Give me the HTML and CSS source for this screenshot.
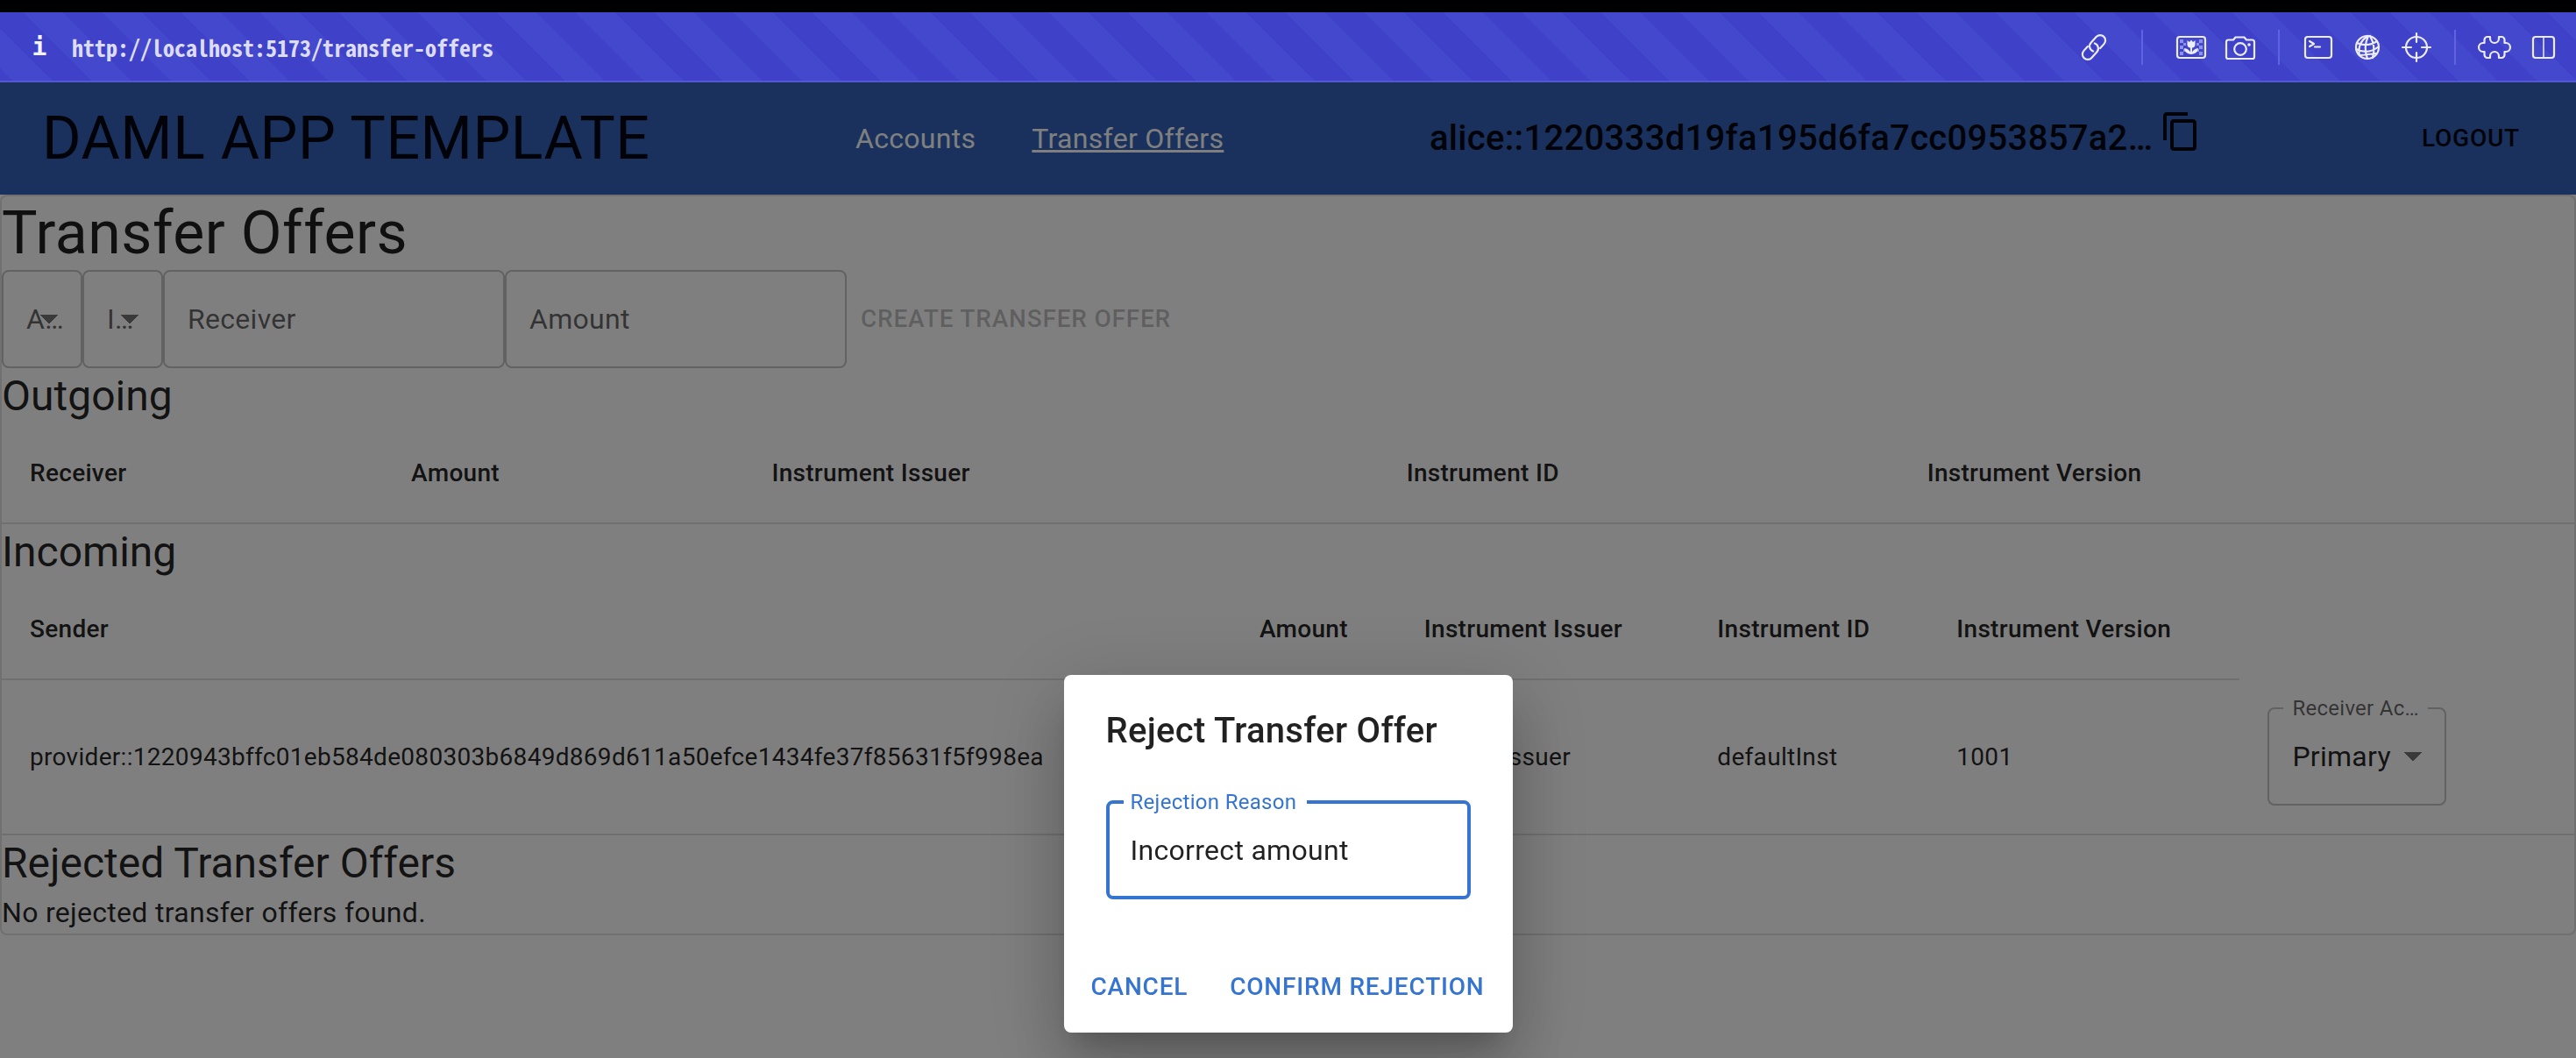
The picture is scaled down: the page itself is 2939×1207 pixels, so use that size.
FILE: index.html
```html
<!DOCTYPE html>
<html lang="en">
<head>
<meta charset="utf-8">
<title>Transfer Offers</title>
<link rel="stylesheet" href="styles.css">
</head>
<body>
<div class="browser-bar">
  <button class="bar-info" type="button" aria-label="Page info">i</button>
  <a class="bar-url" href="#">http://localhost:5173/transfer-offers</a>
  <div class="bar-tools">
    <button class="tool" type="button" aria-label="Copy link"><svg viewBox="0 0 40 40"><g transform="translate(20 20) rotate(-48)"><path d="M4 6h6.600a6 6 0 0 0 0-12h-9a6 6 0 0 0-5.500 8.400M-4-6h-6.600a6 6 0 0 0 0 12h9a6 6 0 0 0 5.500-8.400"/></g></svg></button>
    <span class="bar-sep sep-wide"></span>
    <button class="tool" type="button" aria-label="Images"><svg viewBox="0 0 40 40"><rect x="4" y="8" width="32" height="24" rx="3"/><path class="faint" d="M7 11h4v4h-4zM7 18h4v4h-4zM7 25h4v4h-4zM29 11h4v4h-4zM29 18h4v4h-4zM29 25h4v4h-4zM11 15h3v3h-3zM26 15h3v3h-3zM11 22h3v3h-3zM26 22h3v3h-3z"/><path class="solid" d="M15.500 12l2.500 2 2-2.500 2 2.500 2.500-2v5a4 4 0 0 1-3.500 3.500v5q2-4 7-4.500-.5 6-8 7-7.500-1-8-7 5 .5 7 4.500v-5a4 4 0 0 1-3.500-3.500z"/></svg></button>
    <button class="tool" type="button" aria-label="Screenshot"><svg viewBox="0 0 40 40"><path d="M4 14a2.500 2.500 0 0 1 2.500-2.500h5.500l2.500-3h10l2.500 3h6.500a2.500 2.500 0 0 1 2.500 2.500v17a2 2 0 0 1-2 2h-28a2 2 0 0 1-2-2z"/><circle cx="20" cy="22" r="6.800"/><circle class="solid" cx="30" cy="17" r="1.800"/></svg></button>
    <span class="bar-sep"></span>
    <button class="tool" type="button" aria-label="Console"><svg viewBox="0 0 40 40"><rect x="5" y="8" width="30" height="24" rx="3"/><path d="M10 13l5 3-5 3M16 19.500h6"/></svg></button>
    <button class="tool" type="button" aria-label="Network"><svg viewBox="0 0 40 40"><circle cx="20" cy="20" r="13"/><path d="M8 15q12 5 23-2M7 22q14 7 26-3M12 29q9-1 18-2M20 7q-12 9-9 22M21 7q-6 13-1 26M23 7q7 12 3 25"/></svg></button>
    <button class="tool" type="button" aria-label="Inspect"><svg viewBox="0 0 40 40"><circle cx="20" cy="20" r="12"/><path d="M20 4v10M20 26v10M4 20h10M26 20h10"/></svg></button>
    <span class="bar-sep"></span>
    <button class="tool" type="button" aria-label="Extensions"><svg viewBox="0 0 40 40"><path d="M12 8h3v2a5 5 0 0 0 10 0v-2h3a3.500 3.500 0 0 1 3.500 3.500v3.500h1.500a5 5 0 0 1 0 10h-1.500v3.500a3.500 3.500 0 0 1-3.500 3.500h-3v-2a5 5 0 0 0-10 0v2h-3a3.500 3.500 0 0 1-3.500-3.500v-3.500h-1.500a5 5 0 0 1 0-10h1.500v-3.500a3.500 3.500 0 0 1 3.500-3.500z"/></svg></button>
    <button class="tool" type="button" aria-label="Split view"><svg viewBox="0 0 40 40"><rect x="8" y="8" width="24" height="24" rx="3"/><path class="thin" d="M20 8v24"/></svg></button>
  </div>
</div>
<header class="app-bar">
  <div class="brand">DAML APP TEMPLATE</div>
  <nav class="nav">
    <a class="nav-link" href="#">Accounts</a>
    <a class="nav-link active" href="#">Transfer Offers</a>
  </nav>
  <div class="party">
    <span>alice::1220333d19fa195d6fa7cc0953857a2…</span>
    <button class="copy" type="button" aria-label="Copy party"><svg viewBox="0 0 24 24"><path d="M16 1H4c-1.100 0-2 .9-2 2v14h2V3h12V1zm3 4H8c-1.100 0-2 .9-2 2v14c0 1.100.9 2 2 2h11c1.100 0 2-.9 2-2V7c0-1.100-.9-2-2-2zm0 16H8V7h11v14z"/></svg></button>
  </div>
  <button class="button logout" type="button">LOGOUT</button>
</header>
<main class="card">
  <h1 class="title">Transfer Offers</h1>
  <form class="offer-form">
    <div class="field narrow"><select class="control" aria-label="Account"><option>A…</option></select></div>
    <div class="field narrow"><select class="control" aria-label="Instrument"><option>I…</option></select></div>
    <div class="field"><input class="control" type="text" placeholder="Receiver" aria-label="Receiver"></div>
    <div class="field"><input class="control" type="text" placeholder="Amount" aria-label="Amount"></div>
    <button class="button" type="button" disabled>CREATE TRANSFER OFFER</button>
  </form>
  <h2 class="subtitle">Outgoing</h2>
  <table class="table">
    <thead><tr><th>Receiver</th><th>Amount</th><th>Instrument Issuer</th><th>Instrument ID</th><th>Instrument Version</th></tr></thead>
  </table>
  <h2 class="subtitle">Incoming</h2>
  <table class="table incoming">
    <colgroup><col class="c-sender"><col class="c-amount"><col class="c-issuer"><col class="c-id"><col class="c-version"><col class="c-account"></colgroup>
    <thead><tr><th>Sender</th><th>Amount</th><th>Instrument Issuer</th><th>Instrument ID</th><th>Instrument Version</th></tr></thead>
    <tbody><tr>
      <td>provider::1220943bffc01eb584de080303b6849d869d611a50efce1434fe37f85631f5f998ea</td>
      <td></td><td>defaultIssuer</td><td>defaultInst</td><td>1001</td>
      <td><fieldset class="outlined account"><legend><label for="account">Receiver Ac…</label></legend><select class="control" id="account"><option>Primary</option></select></fieldset></td>
    </tr></tbody>
  </table>
  <h2 class="subtitle">Rejected Transfer Offers</h2>
  <p class="empty">No rejected transfer offers found.</p>
</main>
<div class="backdrop">
  <div class="dialog" role="dialog" aria-labelledby="dialog-title">
    <h2 class="dialog-title" id="dialog-title">Reject Transfer Offer</h2>
    <div class="dialog-body">
      <fieldset class="outlined reason"><legend><label for="reason">Rejection Reason</label></legend><input class="control" id="reason" type="text" value="Incorrect amount"></fieldset>
    </div>
    <div class="dialog-actions">
      <button class="button primary" type="button">CANCEL</button>
      <button class="button primary" type="button">CONFIRM REJECTION</button>
    </div>
  </div>
</div>
</body>
</html>
```
FILE: styles.css
```css
* { box-sizing: border-box; }
body {
  margin: 0;
  background: #fff;
  color: rgba(0, 0, 0, 0.87);
  font: 400 32px/48px Roboto, "Liberation Sans", sans-serif;
  letter-spacing: 0.00938em;
}
button, input, select { font: inherit; letter-spacing: inherit; color: inherit; margin: 0; border: 0; background: none; }
h1, h2, p { margin: 0; font-weight: 400; }

/* Browser chrome sits above the backdrop */
.browser-bar {
  position: relative;
  z-index: 3;
  display: flex;
  align-items: center;
  height: 94px;
  padding: 2px 17px 0 34px;
  border-top: 14px solid #000;
  border-bottom: 2px solid #5457d0;
  background: linear-gradient(45deg, #3f42c9 25%, #4448cd 25% 50%, #3f42c9 50% 75%, #4448cd 75%) -30px 100% / 90px 90px;
  color: #dcdcf8;
  font: 700 26px/40px "Noto Sans Mono CJK JP", "DejaVu Sans Mono", monospace;
  letter-spacing: normal;
}
.bar-info { width: 22px; padding: 0; color: #f4f4ff; font-family: "DejaVu Sans Mono", monospace; font-size: 28px; }
.bar-url { margin-left: 26px; color: inherit; text-decoration: none; }
.bar-tools { display: flex; align-items: center; gap: 16px; margin-left: auto; }
.tool { width: 40px; height: 40px; padding: 0; }
.tool svg {
  display: block; width: 40px; height: 40px;
  fill: none; stroke: #ececff; stroke-width: 2.2; stroke-linecap: round; stroke-linejoin: round;
}
.tool .solid { fill: #ececff; stroke: none; }
.tool .faint { fill: #8f91e4; stroke: none; }
.tool .thin { stroke-width: 1.5; }
.bar-sep { width: 2px; height: 40px; margin: 0 8px 0 7px; background: #6062e0; }
.sep-wide { margin: 0 19px 0 18px; }

.app-bar {
  display: flex;
  align-items: center;
  justify-content: space-between;
  height: 128px;
  padding: 0 48px;
  background: #3262b8;
  color: #020613;
}
.brand { font-size: 68px; line-height: 84px; letter-spacing: 0.00735em; }
.nav { display: flex; gap: 64px; }
.nav-link { color: #fff; text-decoration: none; }
.nav-link.active { text-decoration: underline; }
.party { display: flex; gap: 8px; font-weight: 500; font-size: 40px; line-height: 64px; letter-spacing: 0.0075em; }
.copy { width: 48px; height: 48px; padding: 0; }
.copy svg { display: block; width: 48px; fill: currentColor; }

.button {
  padding: 12px 16px;
  font-weight: 500;
  font-size: 28px;
  line-height: 48px;
  letter-spacing: 0.02857em;
  white-space: nowrap;
}
.button:disabled { color: rgba(0, 0, 0, 0.26); }
.button.primary { color: #3574d1; }

.card { border: 2px solid #e0e0e0; border-radius: 8px; }
.title { font-size: 68px; line-height: 84px; letter-spacing: 0.00735em; }
.subtitle { font-size: 48px; line-height: 64px; letter-spacing: normal; }

.offer-form { display: flex; align-items: center; }
.field {
  width: 390px;
  height: 112px;
  border: 2px solid #c4c4c4;
  border-radius: 8px;
  color: rgba(0, 0, 0, 0.6);
}
.control { width: 100%; height: 100%; padding: 0 26px; outline: none; }
.control::placeholder { color: rgba(0, 0, 0, 0.6); opacity: 1; }
select.control {
  appearance: none;
  background: conic-gradient(from -45deg at 50% 100%, #757575 0 90deg, transparent 0) no-repeat right 26px center / 20px 10px;
}
.field.narrow { width: 92px; }
.narrow .control { padding-right: 0; }

.table { width: 100%; border-collapse: collapse; font-size: 28px; letter-spacing: 0.01071em; }
.table th, .table td { padding: 32px; text-align: left; font-weight: 400; border-bottom: 2px solid #e0e0e0; }
.table th { font-weight: 500; }
.incoming { table-layout: fixed; }
.c-sender { width: 47.8%; }
.c-amount { width: 6.4%; }
.c-issuer { width: 11.4%; }
.c-id { width: 9.3%; }
.c-version { width: 12.1%; }
.c-account { width: 13%; }

.outlined {
  height: 122px;
  margin: -10px 0 0;
  padding: 0;
  min-width: 0;
  border: 2px solid #c4c4c4;
  border-radius: 8px;
  letter-spacing: 0.00938em;
}
.outlined legend { height: 22px; margin-left: 16px; padding: 0 10px; font-size: 24px; line-height: 22px; color: rgba(0, 0, 0, 0.6); }
.outlined .control { display: block; height: 88px; font-size: 32px; }
.account { width: 204px; }

/* The arrow of a select points down from a flat top edge */
select.control {
  background-image: conic-gradient(from -45deg at 50% 100%, #757575 0 90deg, transparent 0);
}

.backdrop { position: fixed; inset: 94px 0 0; z-index: 2; background: rgba(0, 0, 0, 0.5); }
.dialog {
  position: absolute;
  top: 676px;
  left: 50%;
  translate: -50%;
  width: 512px;
  border-radius: 8px;
  background: #fff;
  box-shadow: 0 22px 30px -14px rgba(0, 0, 0, 0.2), 0 48px 76px 6px rgba(0, 0, 0, 0.14), 0 18px 92px 16px rgba(0, 0, 0, 0.12);
}
.dialog-title { padding: 32px 48px; font-weight: 500; font-size: 40px; line-height: 64px; letter-spacing: 0.0075em; }
.dialog-body { padding: 16px 48px 48px; }
.reason { border: 4px solid #3574d1; }
.reason legend { margin-left: 16px; padding: 0 12px 0 8px; color: #3574d1; }
.reason .control { padding: 0 24px; }
.dialog-actions { display: flex; justify-content: flex-end; gap: 16px; padding: 16px; }
```
